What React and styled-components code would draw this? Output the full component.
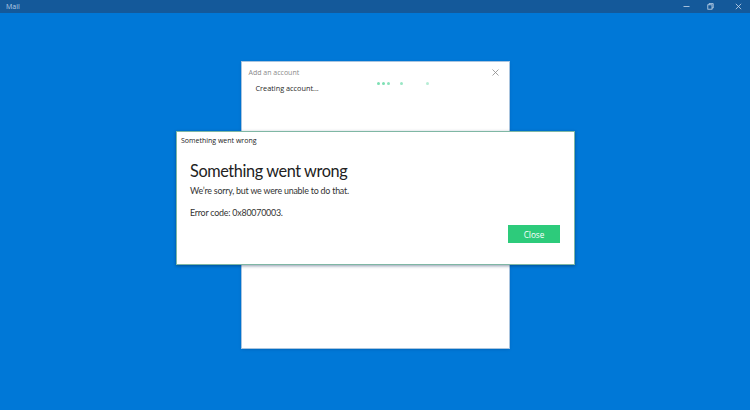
import React from "react";
import styled, { createGlobalStyle } from "styled-components";

const Global = createGlobalStyle`
  html, body { margin: 0; padding: 0; }
  body { background: #0078d7; font-family: "Open Sans", "Noto Sans", sans-serif; }
  #root { width: 750px; height: 410px; overflow: hidden; }
`;

const Page = styled.div`
  width: 750px;
  height: 410px;
  display: flex;
  flex-direction: column;
  background: #0078d7;
`;

const TitleBar = styled.div`
  height: 13px;
  background: #14599a;
  display: flex;
  align-items: center;
  padding-left: 6px;
  color: #b9cfe6;
  font-size: 7px;
  font-family: "Open Sans", sans-serif;
`;

const AppName = styled.span`
  flex: 1;
`;

const WinButton = styled.div`
  width: 24px;
  height: 13px;
  display: flex;
  align-items: center;
  justify-content: center;
  margin-left: ${(p) => p.$gap || 0}px;
`;

const Stage = styled.div`
  flex: 1;
  position: relative;
  display: flex;
  justify-content: center;
  padding-top: 49px;
`;

const BackDialog = styled.div`
  width: 267px;
  height: 286px;
  background: #ffffff;
  box-shadow: 0 0 0 1px #a9c4de, 0 1px 3px rgba(0, 40, 90, 0.35);
  box-sizing: border-box;
  padding: 5px 10px 0 7px;
  display: flex;
  flex-direction: column;
`;

const BackHeader = styled.div`
  display: flex;
  align-items: center;
  justify-content: space-between;
  height: 10px;
  color: #8a8a8a;
  font-size: 7px;
`;

const BackBody = styled.div`
  position: relative;
  margin-top: 6px;
  padding-left: 7px;
  font-size: 7.3px;
  color: #1f1f1f;
`;

const Dots = styled.div`
  position: absolute;
  left: 128px;
  top: -1px;
  width: 60px;
  height: 4px;
`;

const Dot = styled.span`
  position: absolute;
  top: 0;
  width: 3px;
  height: 3px;
  border-radius: 50%;
  background: #6edbab;
  opacity: ${(p) => p.$o};
`;

const FrontDialog = styled.div`
  position: absolute;
  top: 118px;
  left: 176px;
  width: 399px;
  height: 134px;
  box-sizing: border-box;
  background: #ffffff;
  border: 1px solid #7fb7a4;
  box-shadow: 0 1px 3px rgba(0, 30, 70, 0.45);
  display: flex;
  flex-direction: column;
  padding: 3px 14px 0 4px;
`;

const SmallTitle = styled.div`
  font-size: 7px;
  color: #222;
  height: 12px;
  line-height: 12px;
`;

const Content = styled.div`
  padding-left: 9px;
  margin-top: 14px;
  display: flex;
  flex-direction: column;
  font-family: "Lato", "Open Sans", sans-serif;
`;

const Heading = styled.div`
  font-size: 16.3px;
  font-weight: 400;
  color: #222222;
  line-height: 20px;
  letter-spacing: -0.4px;
`;

const Text = styled.div`
  font-size: 8.9px;
  color: #333333;
  line-height: 12px;
  letter-spacing: -0.22px;
  margin-top: ${(p) => p.$mt || 0}px;
`;

const Footer = styled.div`
  display: flex;
  justify-content: flex-end;
  margin-top: 6px;
`;

const CloseButton = styled.button`
  width: 52px;
  height: 18px;
  border: none;
  background: #2dcb7b;
  color: #ffffff;
  font-family: "Open Sans", sans-serif;
  font-size: 8.2px;
  padding: 0;
  cursor: pointer;
`;

export default function App() {
  return (
    <Page>
      <Global />
      <TitleBar>
        <AppName>Mail</AppName>
        <WinButton>
          <svg width="7" height="7" viewBox="0 0 7 7">
            <line x1="0.5" y1="3.5" x2="6.5" y2="3.5" stroke="#c6d8ec" strokeWidth="0.8" />
          </svg>
        </WinButton>
        <WinButton>
          <svg width="7" height="7" viewBox="0 0 7 7" fill="none" stroke="#c6d8ec" strokeWidth="0.8">
            <rect x="0.8" y="1.8" width="4.2" height="4.4" />
            <polyline points="2,1.8 2,0.6 6.2,0.6 6.2,5 5,5" />
          </svg>
        </WinButton>
        <WinButton $gap={4}>
          <svg width="7" height="7" viewBox="0 0 7 7" stroke="#c6d8ec" strokeWidth="0.8">
            <line x1="0.8" y1="0.8" x2="6.2" y2="6.2" />
            <line x1="6.2" y1="0.8" x2="0.8" y2="6.2" />
          </svg>
        </WinButton>
      </TitleBar>
      <Stage>
        <BackDialog>
          <BackHeader>
            <span>Add an account</span>
            <svg width="7" height="7" viewBox="0 0 7 7" stroke="#8a8a8a" strokeWidth="0.8">
              <line x1="0.5" y1="0.5" x2="6.5" y2="6.5" />
              <line x1="6.5" y1="0.5" x2="0.5" y2="6.5" />
            </svg>
          </BackHeader>
          <BackBody>
            Creating account...
            <Dots>
              <Dot $o={0.9} style={{ left: 0 }} />
              <Dot $o={0.9} style={{ left: 5 }} />
              <Dot $o={0.8} style={{ left: 10 }} />
              <Dot $o={0.7} style={{ left: 23 }} />
              <Dot $o={0.5} style={{ left: 49 }} />
            </Dots>
          </BackBody>
        </BackDialog>
        <FrontDialog>
          <SmallTitle>Something went wrong</SmallTitle>
          <Content>
            <Heading>Something went wrong</Heading>
            <Text $mt={4}>We’re sorry, but we were unable to do that.</Text>
            <Text $mt={10}>Error code: 0x80070003.</Text>
          </Content>
          <Footer>
            <CloseButton>Close</CloseButton>
          </Footer>
        </FrontDialog>
      </Stage>
    </Page>
  );
}
